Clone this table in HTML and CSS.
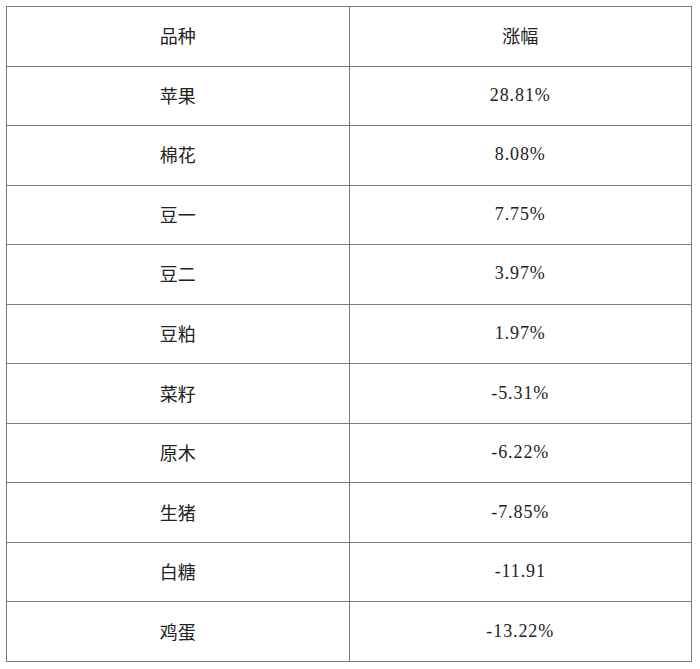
FILE: index.html
```html
<!DOCTYPE html>
<html lang="zh-CN">
<head>
<meta charset="utf-8">
<title>品种涨幅</title>
<link rel="stylesheet" href="styles.css">
</head>
<body>
<table class="grid">
  <thead>
    <tr><th>品种</th><th>涨幅</th></tr>
  </thead>
  <tbody>
    <tr><td>苹果</td><td class="num">28.81%</td></tr>
    <tr><td>棉花</td><td class="num">8.08%</td></tr>
    <tr><td>豆一</td><td class="num">7.75%</td></tr>
    <tr><td>豆二</td><td class="num">3.97%</td></tr>
    <tr><td>豆粕</td><td class="num">1.97%</td></tr>
    <tr><td>菜籽</td><td class="num">-5.31%</td></tr>
    <tr><td>原木</td><td class="num">-6.22%</td></tr>
    <tr><td>生猪</td><td class="num">-7.85%</td></tr>
    <tr><td>白糖</td><td class="num">-11.91</td></tr>
    <tr><td>鸡蛋</td><td class="num">-13.22%</td></tr>
  </tbody>
</table>
</body>
</html>
```
FILE: styles.css
```css
html, body {
  margin: 0;
  padding: 0;
  background: #ffffff;
}
body {
  padding: 6px 0 0 6px;
  font-family: "Noto Sans CJK SC", "Noto Sans", sans-serif;
  color: #222222;
}
.grid {
  border-collapse: collapse;
  width: 686px;
  table-layout: fixed;
}
.grid th,
.grid td {
  border: 1px solid #7a7a7a;
  height: 56.55px;
  padding: 0 0 2px 0;
  text-align: center;
  vertical-align: middle;
  font-size: 18px;
  font-weight: 400;
  line-height: 1;
}
.grid .num {
  font-family: "Liberation Serif", "Noto Sans CJK SC", serif;
  font-size: 18px;
  letter-spacing: 0.9px;
}
```
